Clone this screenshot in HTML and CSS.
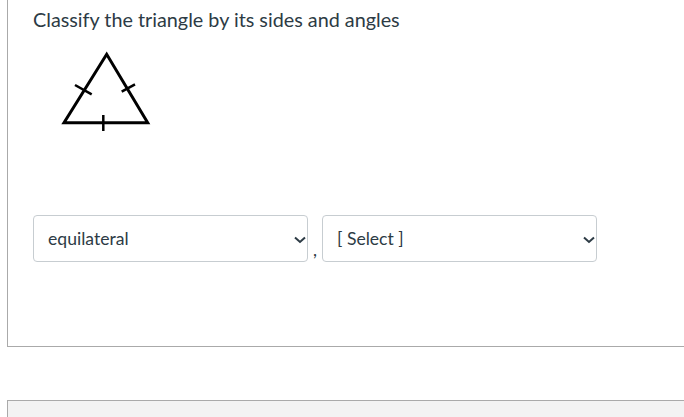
FILE: index.html
```html
<!DOCTYPE html>
<html lang="en">
<head>
  <meta charset="UTF-8">
  <meta name="viewport" content="width=device-width, initial-scale=1.0">
  <title>Quiz question</title>
  <link rel="stylesheet" href="styles.css">
</head>
<body>
  <div class="question">
    <p class="prompt">Classify the triangle by its sides and angles</p>

    <svg class="figure" width="100" height="90" viewBox="0 0 100 90">
      <polygon points="46.7,4.3 4,72.7 87.7,72.7" fill="none" stroke="#000" stroke-width="3" stroke-linejoin="miter"/>
      <line x1="15" y1="35" x2="31.7" y2="44.3" stroke="#000" stroke-width="2.5"/>
      <line x1="61.7" y1="41.7" x2="75" y2="34.3" stroke="#000" stroke-width="2.5"/>
      <line x1="43.3" y1="65" x2="43.3" y2="81" stroke="#000" stroke-width="2.5"/>
    </svg>

    <div class="answers">
      <div class="dropdown">
        <span class="dropdown-value">equilateral</span>
        <svg class="chevron" width="12" height="8" viewBox="0 0 12 8"><path d="M1 1.5 L6 6 L11 1.5" fill="none" stroke="#2d3b45" stroke-width="2"/></svg>
      </div>
      <span class="comma">,</span>
      <div class="dropdown">
        <span class="dropdown-value">[ Select ]</span>
        <svg class="chevron" width="12" height="8" viewBox="0 0 12 8"><path d="M1 1.5 L6 6 L11 1.5" fill="none" stroke="#2d3b45" stroke-width="2"/></svg>
      </div>
    </div>
  </div>

  <div class="question next"></div>
</body>
</html>
```

FILE: styles.css
```css
body {
  margin: 0;
  overflow: hidden;
  background: #fff;
  font-family: Lato, "Open Sans", sans-serif;
  color: #2d3b45;
}

.question {
  margin-left: 7px;
  width: 720px;
  height: 347px;
  box-sizing: border-box;
  border-left: 1px solid #aaaaaa;
  border-bottom: 1px solid #aaaaaa;
  padding: 7px 0 0 25px;
}

.prompt {
  margin: 0;
  font-size: 19.8px;
  line-height: 24px;
}

.figure {
  display: block;
  margin: 19px 0 0 27px;
}

.answers {
  display: flex;
  align-items: flex-start;
  margin-top: 75px;
}

.dropdown {
  width: 275px;
  height: 47px;
  box-sizing: border-box;
  border: 1px solid #c7cdd1;
  border-radius: 4px;
  display: flex;
  align-items: center;
  padding: 0 1px 0 14px;
}

.dropdown-value {
  flex: 1;
  font-size: 17.6px;
}

.chevron {
  display: block;
  margin-top: 2px;
}

.comma {
  width: 14px;
  text-align: center;
  font-size: 17.6px;
  margin-top: 24px;
}

.next {
  height: 40px;
  margin-top: 53px;
  border-top: 1px solid #aaaaaa;
  border-bottom: none;
  background: #f3f3f3;
}
```
